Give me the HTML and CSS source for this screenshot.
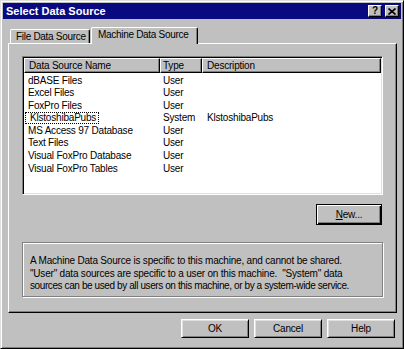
FILE: index.html
```html
<!DOCTYPE html>
<html lang="en">
<head>
  <meta charset="UTF-8">
  <meta name="viewport" content="width=device-width, initial-scale=1.0">
  <title>Select Data Source</title>
  <link rel="stylesheet" href="styles.css">
</head>
<body>
  <div class="window">
    <div class="titlebar">
      <span class="title">Select Data Source</span>
      <div class="caption-btns">
        <span class="cap-btn help-glyph">?</span>
        <span class="cap-btn">
          <svg width="8" height="7" viewBox="0 0 8 7"><path d="M0.5 0.5 L7.5 6.5 M7.5 0.5 L0.5 6.5" stroke="#000" stroke-width="1.6"/></svg>
        </span>
      </div>
    </div>

    <div class="dialog-body">
      <div class="tabs">
        <div class="tab">File Data Source</div>
        <div class="tab active">Machine Data Source</div>
      </div>

      <div class="panel">
        <div class="listview">
          <div class="lv-head">
            <span>Data Source Name</span>
            <span>Type</span>
            <span>Description</span>
          </div>
          <div class="lv-body">
            <div class="lv-row"><span>dBASE Files</span><span>User</span><span></span></div>
            <div class="lv-row"><span>Excel Files</span><span>User</span><span></span></div>
            <div class="lv-row"><span>FoxPro Files</span><span>User</span><span></span></div>
            <div class="lv-row"><span><span class="focus">KlstoshibaPubs</span></span><span>System</span><span>KlstoshibaPubs</span></div>
            <div class="lv-row"><span>MS Access 97 Database</span><span>User</span><span></span></div>
            <div class="lv-row"><span>Text Files</span><span>User</span><span></span></div>
            <div class="lv-row"><span>Visual FoxPro Database</span><span>User</span><span></span></div>
            <div class="lv-row"><span>Visual FoxPro Tables</span><span>User</span><span></span></div>
          </div>
        </div>

        <div class="new-row">
          <button class="btn default"><u>N</u>ew...</button>
        </div>

        <div class="note">
          A Machine Data Source is specific to this machine, and cannot be shared.<br>
          "User" data sources are specific to a user on this machine. &nbsp;"System" data<br>
          <span class="tight">sources can be used by all users on this machine, or by a system-wide service.</span>
        </div>
      </div>

      <div class="actions">
        <button class="btn">OK</button>
        <button class="btn">Cancel</button>
        <button class="btn">Help</button>
      </div>
    </div>
  </div>
</body>
</html>
```

FILE: styles.css
```css
body {
  margin: 0;
  font-family: "Liberation Sans", Arial, sans-serif;
  font-size: 10px;
  letter-spacing: -0.2px;
  color: #000;
  background: #c0c0c0;
}

.window {
  width: 404px;
  height: 349px;
  box-sizing: border-box;
  border: 1px solid;
  border-color: #dfdfdf #000 #000 #dfdfdf;
  box-shadow: inset 1px 1px #fff, inset -1px -1px #808080;
  padding: 2px;
  background: #c0c0c0;
}

.titlebar {
  height: 16px;
  background: #0a0a80;
  color: #fff;
  display: flex;
  align-items: center;
  justify-content: space-between;
  padding: 0 2px 0 3px;
}

.title {
  font-size: 11px;
  font-weight: bold;
  letter-spacing: 0;
}

.caption-btns {
  display: flex;
  gap: 3px;
}

.cap-btn {
  width: 14px;
  height: 12px;
  box-sizing: border-box;
  background: #c0c0c0;
  border: 1px solid;
  border-color: #fff #000 #000 #fff;
  box-shadow: inset -1px -1px #808080;
  display: flex;
  align-items: center;
  justify-content: center;
  color: #000;
}

.help-glyph {
  font-size: 10px;
  font-weight: bold;
  line-height: 10px;
}

.dialog-body {
  padding: 0 4px 0 5px;
}

.tabs {
  height: 24px;
  display: flex;
  align-items: flex-end;
  padding-left: 2px;
}

.tab {
  width: 80px;
  height: 14px;
  box-sizing: border-box;
  border: 1px solid;
  border-color: #fff #000 transparent #fff;
  border-bottom: none;
  border-radius: 2px 2px 0 0;
  box-shadow: inset -1px 0 #808080;
  padding-left: 5px;
  line-height: 13px;
  letter-spacing: -0.3px;
  white-space: nowrap;
}

.tab.active {
  width: 107px;
  height: 17px;
  margin-left: 1px;
  margin-bottom: -1px;
  padding-left: 6px;
  line-height: 14px;
  background: #c0c0c0;
  position: relative;
  z-index: 1;
}

.panel {
  height: 270px;
  box-sizing: border-box;
  border: 1px solid;
  border-color: #fff #000 #000 #fff;
  box-shadow: inset -1px -1px #808080;
  padding: 12px 13px 0 13px;
}

.listview {
  height: 139px;
  box-sizing: border-box;
  background: #fff;
  border: 1px solid;
  border-color: #808080 #fff #fff #808080;
  box-shadow: inset 1px 1px #000, inset -1px -1px #dfdfdf;
  padding: 1px;
}

.lv-head,
.lv-row {
  display: grid;
  grid-template-columns: 136px 42px 1fr;
}

.lv-head span {
  height: 15px;
  box-sizing: border-box;
  background: #c0c0c0;
  border: 1px solid;
  border-color: #fff #000 #000 #fff;
  box-shadow: inset -1px -1px #808080;
  padding-left: 4px;
  line-height: 13px;
}

.lv-head span:nth-child(2) {
  padding-left: 2px;
}

.lv-body {
  padding-top: 1.5px;
}

.lv-row {
  line-height: 12.6px;
  white-space: nowrap;
}

.lv-row span:nth-child(1) {
  padding-left: 4px;
}

.lv-row span:nth-child(2) {
  padding-left: 3px;
}

.lv-row span:nth-child(3) {
  padding-left: 5px;
}

.lv-row .focus {
  display: inline-block;
  border: 1px dotted #000;
  padding: 0 2px;
  margin-left: -3px;
  line-height: 10px;
}

.new-row {
  display: flex;
  justify-content: flex-end;
  margin-top: 9px;
  padding-right: 1px;
}

.btn {
  width: 68px;
  height: 19px;
  box-sizing: border-box;
  padding: 0;
  background: #c0c0c0;
  border: 1px solid;
  border-color: #fff #000 #000 #fff;
  box-shadow: inset 1px 1px #dfdfdf, inset -1px -1px #808080;
  font-family: "Liberation Sans", Arial, sans-serif;
  font-size: 10px;
  letter-spacing: -0.2px;
  color: #000;
}

.btn.default {
  width: 66px;
  height: 21px;
  border: 1px solid #000;
  box-shadow: inset 1px 1px #fff, inset -1px -1px #000, inset -2px -2px #808080;
}

.note {
  margin-top: 17px;
  height: 55px;
  box-sizing: border-box;
  border: 1px solid #808080;
  box-shadow: inset 1px 1px #fff, 1px 1px #fff;
  padding: 12px 0 0 7px;
  line-height: 12.5px;
  white-space: nowrap;
}

.note .tight {
  letter-spacing: -0.4px;
}

.actions {
  display: flex;
  justify-content: flex-end;
  gap: 5px;
  margin-top: 6px;
  padding-right: 2px;
}
```
